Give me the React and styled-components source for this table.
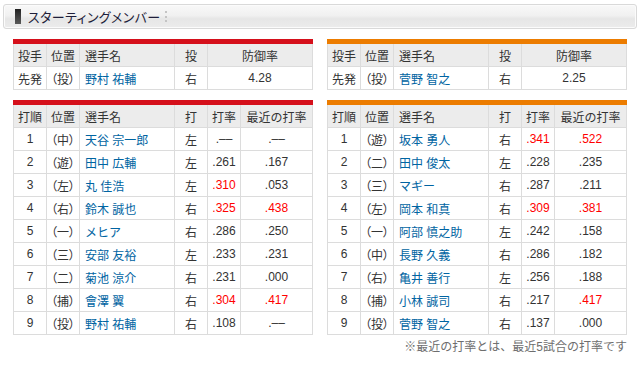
import React from "react";
import styled, { createGlobalStyle } from "styled-components";

const GlobalStyle = createGlobalStyle`
  html, body { margin: 0; padding: 0; background: #fff; }
  body {
    font-family: "Liberation Sans", "Noto Sans CJK JP", sans-serif;
    color: #333;
    font-size: 12px;
  }
`;

const Page = styled.div`
  width: 640px;
  padding: 4px 0 0 3px;
  box-sizing: border-box;
`;

const TitleBar = styled.div`
  width: 634px;
  height: 25px;
  box-sizing: border-box;
  border: 1px solid #d9d9d9;
  border-radius: 3px;
  background: linear-gradient(#f8f8f8 0%, #f1f1f1 45%, #e6e6e6 60%, #ececec 100%);
  box-shadow: inset 0 0 0 1px #fbfbfb;
  display: flex;
  align-items: center;
  padding-left: 11px;
`;

const TitleMark = styled.span`
  width: 6px;
  height: 15px;
  background: linear-gradient(#222, #5a5a5a);
  margin-right: 7px;
`;

const TitleText = styled.h2`
  margin: 0;
  font-family: "Noto Sans CJK JP", sans-serif;
  font-size: 13px;
  font-weight: normal;
  color: #1e1e3a;
  font-feature-settings: "palt";
  letter-spacing: 0.4px;
  line-height: 1;
`;

const TitleDots = styled.span`
  width: 0;
  height: 11px;
  border-left: 2px dotted #c4c4c4;
  margin-left: 4px;
`;

const Columns = styled.div`
  display: grid;
  grid-template-columns: 300px 300px;
  column-gap: 14px;
  margin: 10px 0 0 10px;
`;

const TeamColumn = styled.div`
  display: flex;
  flex-direction: column;
  gap: 10px;
`;

const Table = styled.table`
  width: 300px;
  table-layout: fixed;
  border-collapse: separate;
  border-spacing: 0;
  border-top: 5px solid ${(p) => p.$accent};
  font-size: 12px;
`;

const HeadCell = styled.th`
  height: 23px;
  padding: 0;
  box-sizing: border-box;
  background: #ececec;
  font-weight: normal;
  color: #333;
  text-align: ${(p) => (p.$left ? "left" : "center")};
  padding-left: ${(p) => (p.$left ? "5px" : "0")};
  border-right: 1px solid #dcdcdc;
  border-bottom: 1px solid #dcdcdc;
  white-space: nowrap;
  &:first-child { border-left: 1px solid #dcdcdc; }
`;

const Cell = styled.td`
  height: 23px;
  padding: 0;
  box-sizing: border-box;
  background: #fff;
  color: ${(p) => (p.$hot ? "#f00" : p.$link ? "#0064a2" : "#333")};
  text-align: ${(p) => (p.$left ? "left" : "center")};
  padding-left: ${(p) => (p.$left ? "5px" : "0")};
  border-right: 1px solid #dcdcdc;
  border-bottom: 1px solid #dcdcdc;
  white-space: nowrap;
  font-feature-settings: ${(p) => (p.$pos ? '"palt"' : "normal")};
  &:first-child { border-left: 1px solid #dcdcdc; }
`;

const Note = styled.p`
  margin: 2px 0 0 0;
  width: 624px;
  padding-left: 10px;
  text-align: right;
  color: #6e6e6e;
  font-size: 12px;
  line-height: 20px;
  box-sizing: border-box;
`;

const hot = (v) => {
  const n = parseFloat(v);
  return !isNaN(n) && n >= 0.3;
};

const teams = [
  {
    accent: "#d5101b",
    pitcher: { pos: "（投）", name: "野村 祐輔", hand: "右", era: "4.28" },
    lineup: [
      ["1", "（中）", "天谷 宗一郎", "左", ".––", ".––"],
      ["2", "（遊）", "田中 広輔", "左", ".261", ".167"],
      ["3", "（左）", "丸 佳浩", "左", ".310", ".053"],
      ["4", "（右）", "鈴木 誠也", "右", ".325", ".438"],
      ["5", "（一）", "メヒア", "右", ".286", ".250"],
      ["6", "（三）", "安部 友裕", "左", ".233", ".231"],
      ["7", "（二）", "菊池 涼介", "右", ".231", ".000"],
      ["8", "（捕）", "會澤 翼", "右", ".304", ".417"],
      ["9", "（投）", "野村 祐輔", "右", ".108", ".––"],
    ],
  },
  {
    accent: "#ec7c00",
    pitcher: { pos: "（投）", name: "菅野 智之", hand: "右", era: "2.25" },
    lineup: [
      ["1", "（遊）", "坂本 勇人", "右", ".341", ".522"],
      ["2", "（二）", "田中 俊太", "左", ".228", ".235"],
      ["3", "（三）", "マギー", "右", ".287", ".211"],
      ["4", "（左）", "岡本 和真", "右", ".309", ".381"],
      ["5", "（一）", "阿部 慎之助", "左", ".242", ".158"],
      ["6", "（中）", "長野 久義", "右", ".286", ".182"],
      ["7", "（右）", "亀井 善行", "左", ".256", ".188"],
      ["8", "（捕）", "小林 誠司", "右", ".217", ".417"],
      ["9", "（投）", "菅野 智之", "右", ".137", ".000"],
    ],
  },
];

function PitcherTable({ accent, pitcher }) {
  return (
    <Table $accent={accent}>
      <colgroup>
        <col style={{ width: 34 }} />
        <col style={{ width: 33 }} />
        <col style={{ width: 95 }} />
        <col style={{ width: 33 }} />
        <col style={{ width: 105 }} />
      </colgroup>
      <thead>
        <tr>
          <HeadCell>投手</HeadCell>
          <HeadCell>位置</HeadCell>
          <HeadCell $left>選手名</HeadCell>
          <HeadCell>投</HeadCell>
          <HeadCell>防御率</HeadCell>
        </tr>
      </thead>
      <tbody>
        <tr>
          <Cell>先発</Cell>
          <Cell $pos>{pitcher.pos}</Cell>
          <Cell $left $link>{pitcher.name}</Cell>
          <Cell>{pitcher.hand}</Cell>
          <Cell>{pitcher.era}</Cell>
        </tr>
      </tbody>
    </Table>
  );
}

function LineupTable({ accent, lineup }) {
  return (
    <Table $accent={accent}>
      <colgroup>
        <col style={{ width: 34 }} />
        <col style={{ width: 33 }} />
        <col style={{ width: 95 }} />
        <col style={{ width: 33 }} />
        <col style={{ width: 33 }} />
        <col style={{ width: 72 }} />
      </colgroup>
      <thead>
        <tr>
          <HeadCell>打順</HeadCell>
          <HeadCell>位置</HeadCell>
          <HeadCell $left>選手名</HeadCell>
          <HeadCell>打</HeadCell>
          <HeadCell>打率</HeadCell>
          <HeadCell>最近の打率</HeadCell>
        </tr>
      </thead>
      <tbody>
        {lineup.map(([no, pos, name, hand, avg, recent]) => (
          <tr key={no}>
            <Cell>{no}</Cell>
            <Cell $pos>{pos}</Cell>
            <Cell $left $link>{name}</Cell>
            <Cell>{hand}</Cell>
            <Cell $hot={hot(avg)}>{avg}</Cell>
            <Cell $hot={hot(recent)}>{recent}</Cell>
          </tr>
        ))}
      </tbody>
    </Table>
  );
}

export default function App() {
  return (
    <>
      <GlobalStyle />
      <Page>
        <TitleBar>
          <TitleMark />
          <TitleText>スターティングメンバー</TitleText>
          <TitleDots />
        </TitleBar>
        <Columns>
          {teams.map((t, i) => (
            <TeamColumn key={i}>
              <PitcherTable accent={t.accent} pitcher={t.pitcher} />
              <LineupTable accent={t.accent} lineup={t.lineup} />
            </TeamColumn>
          ))}
        </Columns>
        <Note>※最近の打率とは、最近5試合の打率です</Note>
      </Page>
    </>
  );
}
